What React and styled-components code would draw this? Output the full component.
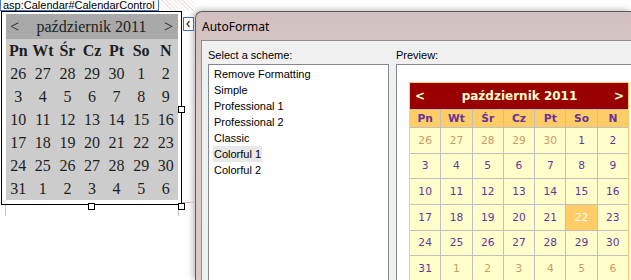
import React from 'react'
import styled, { createGlobalStyle } from 'styled-components'

const GlobalStyle = createGlobalStyle`
  html, body {
    margin: 0;
    padding: 0;
    background: #fff;
  }
  body {
    width: 631px;
    height: 280px;
    overflow: hidden;
  }
`

const Page = styled.div`
  display: flex;
  width: 631px;
  height: 280px;
  overflow: hidden;
  background: #fff;
`

/* ---------- designer surface (left) ---------- */

const Designer = styled.div`
  position: relative;
  width: 195px;
  flex: none;
  display: flex;
  flex-direction: column;
  align-items: flex-start;
`

const TagRow = styled.div`
  display: flex;
  width: 100%;
  height: 11px;
`

const ControlTag = styled.div`
  height: 10px;
  padding: 0 3px 0 2px;
  border: 1px solid #4a78c0;
  border-top: none;
  font: 11px/10px "Liberation Sans", Arial, sans-serif;
  color: #000;
  background: #fff;
  white-space: nowrap;
`

const Hatch = styled.div`
  flex: 1;
  background: repeating-linear-gradient(45deg, #f1e4e4 0 1px, #fff 1px 3px);
`

const ControlFrame = styled.div`
  position: relative;
  width: 172px;
  margin-left: 1px;
  border: 1px solid #000;
  padding: 2px 3px 4px 4px;
  background: #fff;
  z-index: 1;
`

const Handle = styled.span`
  position: absolute;
  width: 5px;
  height: 5px;
  border: 1px solid #000;
  background: #fff;
  left: ${p => p.$x}px;
  top: ${p => p.$y}px;
`

const SmartTag = styled.div`
  position: absolute;
  left: 183px;
  top: 17px;
  width: 9px;
  height: 12px;
  border: 1px solid #3d6cc0;
  background: #fff;
  display: flex;
  align-items: center;
  justify-content: center;
  z-index: 2;
`

const GuideLine = styled.span`
  position: absolute;
  background: #dcbcbc;
  left: ${p => p.$x}px;
  top: ${p => p.$y}px;
  width: ${p => p.$w}px;
  height: ${p => p.$h}px;
`

const GrayCalendar = styled.div`
  width: 172px;
  background: #cccccc;
  font-family: "Liberation Serif", "Times New Roman", serif;
  color: #1e1e1e;
`

const GrayTitle = styled.div`
  display: flex;
  justify-content: space-between;
  align-items: center;
  height: 25px;
  padding: 0 5px 0 4px;
  background: #a9a9a9;
  font-size: 16px;
`

const GrayGrid = styled.div`
  display: grid;
  grid-template-columns: repeat(7, 1fr);
  grid-auto-rows: 23px;
  font-size: 16px;
  line-height: 23px;
  text-align: center;
`

const GrayHead = styled.div`
  font-weight: bold;
`

/* ---------- AutoFormat dialog (right) ---------- */

const Dialog = styled.div`
  flex: 1;
  margin-top: 11px;
  display: flex;
  flex-direction: column;
  border: 1px solid #5a5a5a;
  border-right: none;
  border-bottom: none;
  border-top-left-radius: 7px;
  background: linear-gradient(180deg, #d2c0c0 0%, #dccdcd 40%, #d8c8c8 100%);
  box-shadow: -2px -1px 6px rgba(0, 0, 0, 0.28);
`

const TitleBar = styled.div`
  height: 28px;
  padding-left: 6px;
  display: flex;
  align-items: center;
  font: 12px "Noto Sans", "Segoe UI", sans-serif;
  color: #000;
`

const Client = styled.div`
  flex: 1;
  min-height: 0;
  margin-left: 5px;
  border: 1px solid #8e8e8e;
  border-right: none;
  border-bottom: none;
  background: #f0f0f0;
  padding: 6px 0 0 6px;
  display: grid;
  grid-template-columns: 181px 1fr;
  grid-template-rows: 17px 1fr;
  column-gap: 7px;
  font: 11px "Liberation Sans", Tahoma, sans-serif;
  color: #000;
`

const Label = styled.div`
  line-height: 17px;
`

const ListBox = styled.div`
  border: 1px solid #828790;
  border-bottom: none;
  background: #fff;
  padding: 1px 0 0 4px;
  display: flex;
  flex-direction: column;
  align-items: flex-start;
`

const ListItem = styled.div`
  height: 16px;
  line-height: 16px;
  padding: 0 1px;
  background: ${p => (p.$selected ? '#e8e8e8' : 'transparent')};
`

const PreviewBox = styled.div`
  border: 1px solid #828790;
  border-right: none;
  border-bottom: none;
  background: #fff;
  padding: 17px 0 0 12px;
  overflow: hidden;
`

const ColorCalendar = styled.div`
  width: 218px;
  border: 1px solid #ffcc66;
  background: #c0c0c0;
  display: grid;
  grid-template-columns: repeat(7, 1fr);
  grid-template-rows: 26px 17px;
  grid-auto-rows: 24.67px;
  gap: 1px;
  font-family: "DejaVu Sans", Verdana, sans-serif;
  font-size: 10.67px;
  color: #663399;
`

const ColorTitle = styled.div`
  grid-column: 1 / -1;
  display: flex;
  justify-content: space-between;
  align-items: center;
  padding: 0 4px 0 5px;
  background: #990000;
  color: #ffffcc;
  font-size: 12px;
  font-weight: bold;
`

const ColorHead = styled.div`
  display: flex;
  align-items: center;
  justify-content: center;
  background: #ffcc66;
  font-weight: bold;
`

const ColorDay = styled.div`
  display: flex;
  align-items: center;
  justify-content: center;
  background: ${p => (p.$today ? '#ffcc66' : '#ffffcc')};
  color: ${p => (p.$today ? '#ffffff' : p.$other ? '#cc9966' : '#663399')};
`

const dayNames = ['Pn', 'Wt', 'Śr', 'Cz', 'Pt', 'So', 'N']

const days = [
  ...[26, 27, 28, 29, 30].map(d => ({ d, other: true })),
  ...Array.from({ length: 31 }, (_, i) => ({ d: i + 1 })),
  ...[1, 2, 3, 4, 5, 6].map(d => ({ d, other: true })),
]

const schemes = [
  'Remove Formatting',
  'Simple',
  'Professional 1',
  'Professional 2',
  'Classic',
  'Colorful 1',
  'Colorful 2',
]

const Chevron = () => (
  <svg width="7" height="10" viewBox="0 0 7 10">
    <polyline points="4.5,2 2,5 4.5,8" fill="none" stroke="#333" strokeWidth="1.2" />
  </svg>
)

export default function App() {
  return (
    <Page>
      <GlobalStyle />
      <Designer>
        <TagRow>
          <ControlTag>asp:Calendar#CalendarControl</ControlTag>
          <Hatch />
        </TagRow>
        <ControlFrame>
          <GrayCalendar>
            <GrayTitle>
              <span>&lt;</span>
              <span>październik 2011</span>
              <span>&gt;</span>
            </GrayTitle>
            <GrayGrid>
              {dayNames.map(n => (
                <GrayHead key={n}>{n}</GrayHead>
              ))}
              {days.map((x, i) => (
                <div key={i}>{x.d}</div>
              ))}
            </GrayGrid>
          </GrayCalendar>
          <Handle $x={176} $y={94} />
          <Handle $x={86} $y={191} />
          <Handle $x={176} $y={191} />
        </ControlFrame>
        <SmartTag>
          <Chevron />
        </SmartTag>
        <GuideLine $x={0} $y={202} $w={194} $h={1} />
        <GuideLine $x={5} $y={202} $w={1} $h={14} />
        <GuideLine $x={178} $y={202} $w={1} $h={14} />
      </Designer>

      <Dialog>
        <TitleBar>AutoFormat</TitleBar>
        <Client>
          <Label>Select a scheme:</Label>
          <Label>Preview:</Label>
          <ListBox>
            {schemes.map(s => (
              <ListItem key={s} $selected={s === 'Colorful 1'}>
                {s}
              </ListItem>
            ))}
          </ListBox>
          <PreviewBox>
            <ColorCalendar>
              <ColorTitle>
                <span>&lt;</span>
                <span>październik 2011</span>
                <span>&gt;</span>
              </ColorTitle>
              {dayNames.map(n => (
                <ColorHead key={n}>{n}</ColorHead>
              ))}
              {days.map((x, i) => (
                <ColorDay key={i} $other={x.other} $today={!x.other && x.d === 22}>
                  {x.d}
                </ColorDay>
              ))}
            </ColorCalendar>
          </PreviewBox>
        </Client>
      </Dialog>
    </Page>
  )
}
